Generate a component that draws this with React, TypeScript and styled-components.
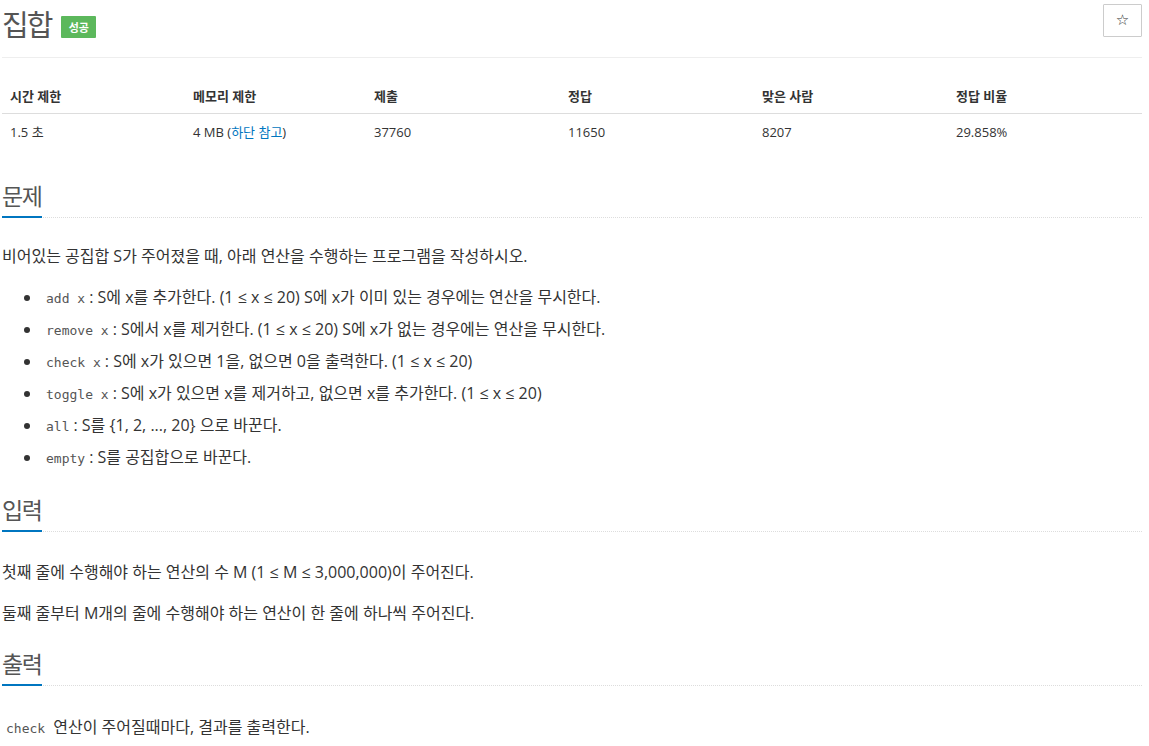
import React from "react";
import styled, { createGlobalStyle } from "styled-components";

const GlobalStyle = createGlobalStyle`
  html, body {
    margin: 0;
    padding: 0;
    background: #fff;
  }
  body {
    font-family: "Open Sans", "Noto Sans CJK KR", sans-serif;
    color: #333;
    font-size: 13px;
  }
`;

const stats = [
  { label: "시간 제한", value: "1.5 초", width: 183 },
  { label: "메모리 제한", value: "memory", width: 181 },
  { label: "제출", value: "37760", width: 194 },
  { label: "정답", value: "11650", width: 194 },
  { label: "맞은 사람", value: "8207", width: 194 },
  { label: "정답 비율", value: "29.858%", width: 194 },
];

const ops: [string, string][] = [
  ["add x", "S에 x를 추가한다. (1 ≤ x ≤ 20) S에 x가 이미 있는 경우에는 연산을 무시한다."],
  ["remove x", "S에서 x를 제거한다. (1 ≤ x ≤ 20) S에 x가 없는 경우에는 연산을 무시한다."],
  ["check x", "S에 x가 있으면 1을, 없으면 0을 출력한다. (1 ≤ x ≤ 20)"],
  ["toggle x", "S에 x가 있으면 x를 제거하고, 없으면 x를 추가한다. (1 ≤ x ≤ 20)"],
  ["all", "S를 {1, 2, ..., 20} 으로 바꾼다."],
  ["empty", "S를 공집합으로 바꾼다."],
];

function App() {
  return (
    <Page>
      <GlobalStyle />
      <Header>
        <Title>집합</Title>
        <Badge>성공</Badge>
        <StarButton aria-label="star">☆</StarButton>
      </Header>

      <Table>
        <thead>
          <tr>
            {stats.map((s) => (
              <Th key={s.label} style={{ width: s.width }}>
                {s.label}
              </Th>
            ))}
          </tr>
        </thead>
        <tbody>
          <tr>
            {stats.map((s) => (
              <Td key={s.label}>
                {s.value === "memory" ? (
                  <>
                    4 MB (<Link>하단 참고</Link>)
                  </>
                ) : (
                  s.value
                )}
              </Td>
            ))}
          </tr>
        </tbody>
      </Table>

      <Section $top={31}>
        <Headline>
          <HeadText>문제</HeadText>
        </Headline>
        <Text>비어있는 공집합 S가 주어졌을 때, 아래 연산을 수행하는 프로그램을 작성하시오.</Text>
        <List>
          {ops.map(([code, desc]) => (
            <Item key={code}>
              <Code>{code}</Code>: {desc}
            </Item>
          ))}
        </List>
      </Section>

      <Section $top={25}>
        <Headline>
          <HeadText>입력</HeadText>
        </Headline>
        <Text $first={28}>첫째 줄에 수행해야 하는 연산의 수 M (1 ≤ M ≤ 3,000,000)이 주어진다.</Text>
        <Text>둘째 줄부터 M개의 줄에 수행해야 하는 연산이 한 줄에 하나씩 주어진다.</Text>
      </Section>

      <Section $top={23}>
        <Headline>
          <HeadText>출력</HeadText>
        </Headline>
        <Text $first={29}>
          <Code>check</Code> 연산이 주어질때마다, 결과를 출력한다.
        </Text>
      </Section>
    </Page>
  );
}

export default App;

const Page = styled.div`
  width: 1140px;
  margin-left: 2px;
  padding-bottom: 30px;
`;

const Header = styled.div`
  display: flex;
  align-items: center;
  height: 58px;
  border-bottom: 1px solid #eee;
  box-sizing: border-box;
  padding-bottom: 12px;
`;

const Title = styled.h1`
  margin: 0;
  font-family: "Noto Sans CJK KR", sans-serif;
  font-weight: 400;
  font-size: 29px;
  letter-spacing: -2px;
  line-height: 36px;
  color: #555;
`;

const Badge = styled.span`
  display: inline-flex;
  align-items: center;
  justify-content: center;
  width: 35px;
  height: 22px;
  margin-left: 10px;
  margin-top: 8px;
  background: #5cb85c;
  color: #fff;
  font-family: "Noto Sans CJK KR", sans-serif;
  font-size: 11px;
  font-weight: 700;
  border-radius: 1px;
`;

const StarButton = styled.button`
  margin-left: auto;
  width: 39px;
  height: 33px;
  margin-top: -4px;
  background: #fff;
  border: 1px solid #ccc;
  border-radius: 1px;
  color: #333;
  font-size: 15px;
  line-height: 1;
  padding: 0;
  font-family: "DejaVu Sans", sans-serif;
`;

const Table = styled.table`
  width: 1140px;
  margin-top: 20px;
  border-collapse: collapse;
  table-layout: fixed;
`;

const Th = styled.th`
  text-align: left;
  padding: 8px;
  height: 34px;
  box-sizing: border-box;
  font-size: 13px;
  font-weight: 700;
  color: #333;
  border-bottom: 1px solid #ddd;
`;

const Td = styled.td`
  padding: 8px;
  height: 35px;
  box-sizing: border-box;
  font-size: 13px;
  color: #333;
`;

const Link = styled.span`
  color: #0076c0;
`;

const Section = styled.section<{ $top: number }>`
  margin-top: ${(p) => p.$top}px;
`;

const Headline = styled.div`
  border-bottom: 1px dotted #ddd;
  height: 38px;
  box-sizing: border-box;
`;

const HeadText = styled.h2`
  display: inline-block;
  margin: 0;
  font-family: "Noto Sans CJK KR", sans-serif;
  font-weight: 400;
  font-size: 23px;
  letter-spacing: -1.5px;
  line-height: 30px;
  height: 38px;
  box-sizing: border-box;
  color: #555;
  border-bottom: 2px solid #0076c0;
  padding-right: 1px;
`;

const Text = styled.p<{ $first?: number }>`
  margin: ${(p) => p.$first ?? 26}px 0 0;
  font-size: 16px;
  line-height: 24px;
  color: #333;
  & + & {
    margin-top: 17px;
  }
`;

const List = styled.ul`
  margin: 17px 0 0;
  padding-left: 40px;
`;

const Item = styled.li`
  font-size: 16px;
  line-height: 24px;
  height: 24px;
  color: #333;
  margin-bottom: 8px;
`;

const Code = styled.code`
  font-family: "DejaVu Sans Mono", "Liberation Mono", monospace;
  font-size: 13px;
  line-height: 1;
  color: #555;
  padding: 2px 4px;
`;
